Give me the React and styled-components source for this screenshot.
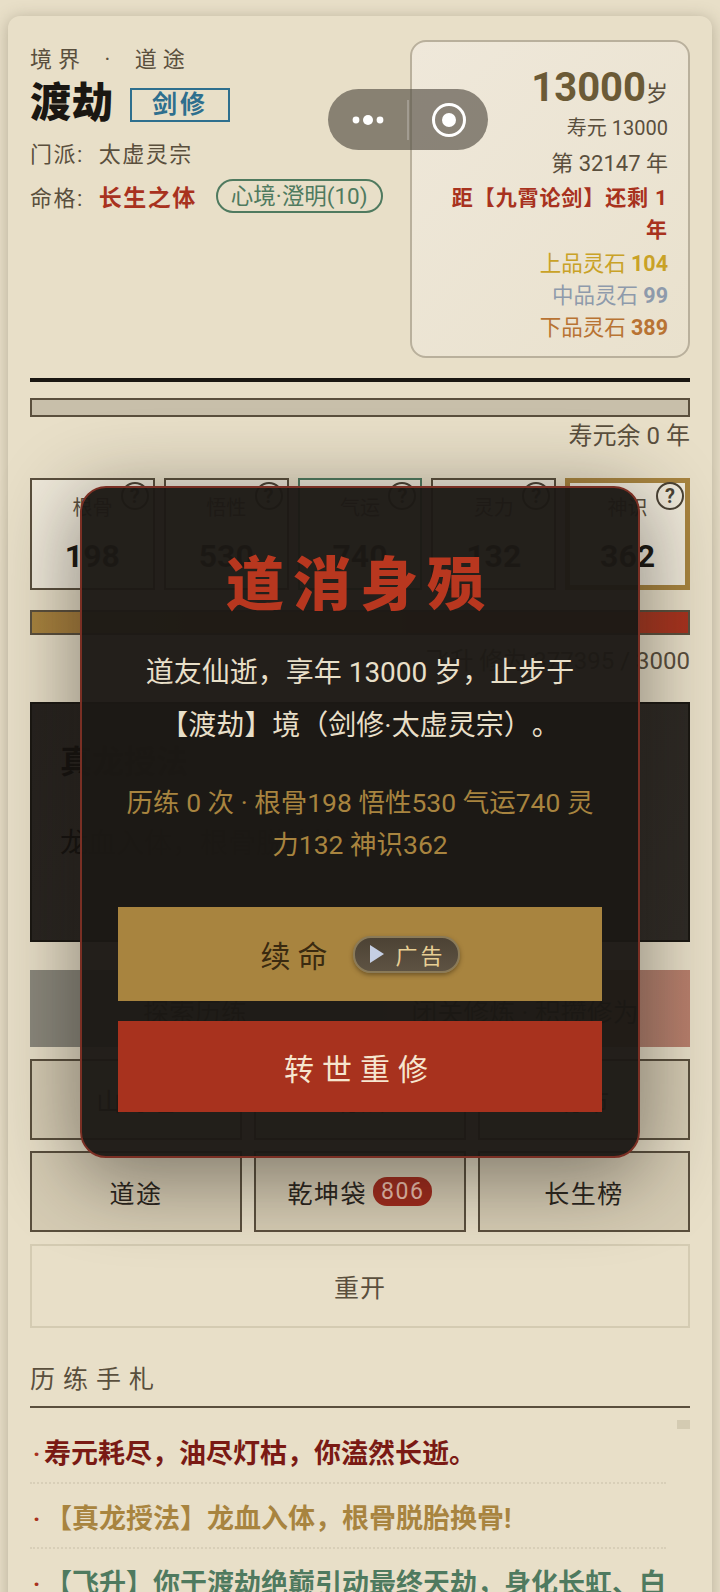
import React from 'react';
import styled, { createGlobalStyle } from 'styled-components';

const Global = createGlobalStyle`
  html, body {
    margin: 0;
    height: 1592px;
    overflow: hidden;
    background: #e8dfc8;
  }
  * { box-sizing: border-box; }
  body {
    font-family: Roboto, "Noto Sans CJK SC", sans-serif;
    text-spacing-trim: space-all;
    color: #1a1712;
  }
`;

const Page = styled.div`
  position: relative;
  height: 1592px;
  overflow: hidden;
  padding: 16px 8px 0;
`;

const Card = styled.div`
  height: 1600px;
  padding: 24px 22px;
  border-radius: 12px;
  background: #e8dfc8;
  box-shadow: 0 2px 16px rgba(90, 79, 61, 0.35);
`;

const Header = styled.div`
  display: flex;
  justify-content: space-between;
  align-items: flex-start;
  height: 317px;
`;

const Left = styled.div`
  padding-top: 2px;
`;

const Realm = styled.div`
  font-size: 22px;
  line-height: 36px;
  letter-spacing: 6px;
  word-spacing: 7px;
  color: #5a4f3d;
`;

const TitleRow = styled.div`
  display: flex;
  align-items: center;
  gap: 16px;
  height: 46px;
`;

const RealmName = styled.div`
  padding-top: 3px;
  font-size: 41px;
  font-weight: 900;
  line-height: 44px;
  letter-spacing: 1px;
`;

const SchoolTag = styled.div`
  width: 100px;
  height: 34px;
  margin-top: 7px;
  border: 2px solid #2e6f8e;
  color: #2e6f8e;
  font-size: 25px;
  font-weight: 700;
  letter-spacing: 3px;
  line-height: 29px;
  text-align: center;
`;

const InfoRow = styled.div`
  display: flex;
  align-items: center;
  height: ${(p) => p.$height || 40}px;
  margin-top: ${(p) => p.$top || 0}px;
  font-size: 22px;
  letter-spacing: 1.5px;
  color: #5a4f3d;
`;

const InfoKey = styled.span`
  margin-right: 15px;
`;

const Fate = styled.span`
  font-size: 23px;
  font-weight: 700;
  color: #a8321e;
`;

const Mood = styled.span`
  margin-left: 19px;
  padding: 0 13px;
  height: 34px;
  line-height: 30px;
  border: 2px solid #4f7a5f;
  border-radius: 17px;
  font-size: 22.5px;
  letter-spacing: 0;
  color: #4f7a5f;
`;

const AgeBox = styled.div`
  width: 280px;
  height: 318px;
  padding: 29px 20px 0;
  border: 2px solid #b9b09c;
  border-radius: 16px;
  background: linear-gradient(135deg, #efe8da, #e9e1cd);
  text-align: right;
  color: #5a4f3d;
`;

const AgeNum = styled.div`
  font-size: 40px;
  font-weight: 700;
  line-height: 34px;
  color: #6b5a36;

  small {
    font-size: 22px;
    font-weight: 400;
    color: #5a4f3d;
  }
`;

const AgeLine = styled.div`
  font-size: ${(p) => p.$size || 20}px;
  line-height: 35px;
`;

const Countdown = styled.div`
  font-size: 21px;
  font-weight: 700;
  line-height: 32px;
  margin: 1px 0 2px;
  letter-spacing: 0.9px;
  color: #a8321e;
`;

const Stone = styled.div`
  font-size: 21.5px;
  line-height: 32px;
  color: ${(p) => p.$color};

  b {
    font-weight: 700;
  }
`;

const ThickLine = styled.div`
  height: 4px;
  margin-top: 21px;
  background: #1a1712;
`;

const LifeBar = styled.div`
  height: 19px;
  margin-top: 16px;
  border: 2px solid #5a4f3d;
  background: #c8bfaa;
`;

const BarNote = styled.div`
  margin-top: ${(p) => p.$top}px;
  font-size: 24px;
  line-height: 36px;
  text-align: right;
  color: #5a4f3d;
`;

const Stats = styled.div`
  display: grid;
  grid-template-columns: repeat(5, 1fr);
  gap: 9px;
  margin-top: 24px;
`;

const Stat = styled.div`
  position: relative;
  height: 112px;
  padding-top: ${(p) => (p.$gold ? 11 : 14)}px;
  border: ${(p) => (p.$gold ? '5px solid #a8843f' : `2px solid ${p.$border || '#5a4f3d'}`)};
  background: #efe9da;
  text-align: center;
`;

const StatName = styled.div`
  font-size: 20px;
  line-height: 28px;
  color: #5a4f3d;
`;

const StatValue = styled.div`
  margin-top: 15px;
  font-size: 32px;
  font-weight: 700;
  line-height: 38px;
`;

const Help = styled.span`
  position: absolute;
  top: ${(p) => (p.$gold ? -1 : 2)}px;
  right: ${(p) => (p.$gold ? 1 : 4)}px;
  width: 28px;
  height: 28px;
  border: 2px solid #4a4234;
  border-radius: 50%;
  background: #efe9da;
  font-size: 20px;
  font-weight: 700;
  line-height: 24px;
  color: #4a4234;
`;

const ExpBar = styled.div`
  height: 25px;
  margin-top: 20px;
  border: 2px solid #5a4f3d;
  background: linear-gradient(90deg, #a8843f, #a8321e);
`;

const DarkPanel = styled.div`
  height: 240px;
  margin-top: 23px;
  padding: 34px 28px;
  border: 2px solid #1a1712;
  background: linear-gradient(135deg, #26221e, #2f2b26);
  color: #14110e;
`;

const PanelTitle = styled.div`
  font-size: 32px;
  font-weight: 700;
  line-height: 48px;
`;

const PanelText = styled.div`
  margin-top: 38px;
  font-size: 28px;
  line-height: 40px;
`;

const ActionRow = styled.div`
  display: grid;
  grid-template-columns: 1fr 1fr;
  height: 77px;
  margin-top: 28px;
  background: linear-gradient(90deg, #8b887c 0 50%, #b97f6c 100%);
  font-size: 26px;
`;

const Action = styled.div`
  display: flex;
  align-items: center;
  justify-content: center;
  padding-top: 4px;
  color: #1a1712;
`;

const NavGrid = styled.div`
  display: grid;
  grid-template-columns: repeat(3, 1fr);
  gap: 11px 12px;
  margin-top: 12px;
`;

const NavButton = styled.div`
  display: flex;
  align-items: center;
  justify-content: center;
  gap: 6px;
  height: 81px;
  border: 2px solid #5a4f3d;
  background: #d6ccb4;
  font-size: 25px;
  letter-spacing: 1.5px;
  color: #2a251d;
`;

const Badge = styled.span`
  padding: 0 8px;
  height: 29px;
  border-radius: 14px;
  background: #a02a1c;
  font-size: 23px;
  line-height: 29px;
  letter-spacing: 1.5px;
  color: #eec0b0;
`;

const Restart = styled.div`
  display: flex;
  align-items: center;
  justify-content: center;
  height: 84px;
  margin-top: 12px;
  border: 2px solid #d4cbb2;
  font-size: 25px;
  letter-spacing: 1px;
  color: #5a4f3d;
`;

const LogHead = styled.div`
  margin-top: 33px;
  padding-bottom: 7px;
  border-bottom: 2px solid #5a4f3d;
  font-size: 25px;
  line-height: 38px;
  letter-spacing: 8px;
  color: #5a4f3d;
`;

const LogWrap = styled.div`
  position: relative;
  padding-top: 11px;
`;

const ScrollThumb = styled.div`
  position: absolute;
  top: 12px;
  right: 0;
  width: 13px;
  height: 9px;
  background: #d4cbb2;
`;

const LogRow = styled.div`
  display: flex;
  margin-right: 24px;
  padding: 15px 0 8px;
  border-bottom: 2px dotted #d8cfb8;
  font-size: 27px;
  font-weight: 700;
  line-height: 40px;
  color: ${(p) => p.$color};
`;

const Dot = styled.span`
  flex: none;
  width: ${(p) => p.$w}px;
  padding-left: 3px;
  color: #a8321e;
  font-size: 24px;
`;

const Capsule = styled.div`
  position: absolute;
  top: 89px;
  left: 328px;
  display: flex;
  align-items: center;
  width: 160px;
  height: 61px;
  border-radius: 31px;
  background: rgba(90, 84, 74, 0.68);
`;

const CapsuleSide = styled.div`
  display: flex;
  align-items: center;
  justify-content: center;
  flex: 1;
  height: 100%;
`;

const CapsuleLine = styled.div`
  width: 2px;
  height: 40px;
  background: rgba(255, 255, 255, 0.22);
`;

const Modal = styled.div`
  position: absolute;
  top: 486px;
  left: 80px;
  width: 560px;
  height: 672px;
  padding: 58px 36px 0;
  border: 2px solid #7a2f24;
  border-radius: 26px;
  background: rgba(28, 25, 21, 0.97);
  box-shadow: 0 16px 80px 6px rgba(26, 23, 18, 0.45);
  text-align: center;
`;

const ModalTitle = styled.div`
  font-size: 58px;
  font-weight: 900;
  line-height: 78px;
  letter-spacing: 9px;
  color: #b8371f;
`;

const ModalBody = styled.div`
  margin-top: 22px;
  font-size: 28px;
  line-height: 53px;
  color: #e8dfc8;
`;

const ModalStats = styled.div`
  margin-top: 30px;
  font-size: 26.5px;
  line-height: 42px;
  color: #a8843f;
`;

const GoldButton = styled.div`
  display: flex;
  align-items: center;
  justify-content: center;
  gap: 22px;
  height: 94px;
  margin-top: 41px;
  background: #a8843f;
  font-size: 30px;
  letter-spacing: 7px;
  color: #3a2a10;
`;

const RedButton = styled.div`
  display: flex;
  align-items: center;
  justify-content: center;
  height: 91px;
  margin-top: 20px;
  background: #a8321e;
  font-size: 30px;
  letter-spacing: 8px;
  color: #f6e6cf;
`;

const AdPill = styled.span`
  display: flex;
  align-items: center;
  gap: 10px;
  height: 37px;
  margin-left: -3px;
  padding: 0 12px 0 14px;
  border: 2px solid #8a7a58;
  border-radius: 18px;
  background: linear-gradient(180deg, #4c4234, #5e5343);
  box-shadow: 0 2px 4px rgba(58, 42, 16, 0.5);
  font-size: 22px;
  letter-spacing: 3px;
  color: #e8cf95;
`;

const stats = [
  { name: '根骨', value: 198 },
  { name: '悟性', value: 530 },
  { name: '气运', value: 740, border: '#4f7a5f' },
  { name: '灵力', value: 132 },
  { name: '神识', value: 362, gold: true },
];

export default function App() {
  return (
    <Page>
      <Global />
      <Card>
        <Header>
          <Left>
            <Realm>境界 · 道途</Realm>
            <TitleRow>
              <RealmName>渡劫</RealmName>
              <SchoolTag>剑修</SchoolTag>
            </TitleRow>
            <InfoRow $top={8}><InfoKey>门派:</InfoKey>太虚灵宗</InfoRow>
            <InfoRow $top={2} $height={44}>
              <InfoKey>命格:</InfoKey>
              <Fate>长生之体</Fate>
              <Mood>心境·澄明(10)</Mood>
            </InfoRow>
          </Left>
          <AgeBox>
            <AgeNum>13000<small>岁</small></AgeNum>
            <AgeLine>寿元 13000</AgeLine>
            <AgeLine $size={22}>第 32147 年</AgeLine>
            <Countdown>距【九霄论剑】还剩 1 年</Countdown>
            <Stone $color="#c9a227">上品灵石 <b>104</b></Stone>
            <Stone $color="#8e9aab">中品灵石 <b>99</b></Stone>
            <Stone $color="#b87333">下品灵石 <b>389</b></Stone>
          </AgeBox>
        </Header>
        <ThickLine />
        <LifeBar />
        <BarNote $top={1}>寿元余 0 年</BarNote>
        <Stats>
          {stats.map((s) => (
            <Stat key={s.name} $gold={s.gold} $border={s.border}>
              <StatName>{s.name}</StatName>
              <StatValue>{s.value}</StatValue>
              <Help $gold={s.gold}>?</Help>
            </Stat>
          ))}
        </Stats>
        <ExpBar />
        <BarNote $top={8}>飞升 修为 377395 / 3000</BarNote>
        <DarkPanel>
          <PanelTitle>真龙授法</PanelTitle>
          <PanelText>龙血入体，根骨脱胎换骨</PanelText>
        </DarkPanel>
        <ActionRow>
          <Action>探索历练</Action>
          <Action>闭关修炼 · 积攒修为</Action>
        </ActionRow>
        <NavGrid>
          <NavButton>山海经</NavButton>
          <NavButton>功法</NavButton>
          <NavButton>坊市</NavButton>
          <NavButton>道途</NavButton>
          <NavButton>乾坤袋<Badge>806</Badge></NavButton>
          <NavButton>长生榜</NavButton>
        </NavGrid>
        <Restart>重开</Restart>
        <LogHead>历练手札</LogHead>
        <LogWrap>
          <ScrollThumb />
          <LogRow $color="#7a1a14"><Dot $w={14}>·</Dot>寿元耗尽，油尽灯枯，你溘然长逝。</LogRow>
          <LogRow $color="#a8843f"><Dot $w={15}>·</Dot>【真龙授法】龙血入体，根骨脱胎换骨!</LogRow>
          <LogRow $color="#4f7a5f"><Dot $w={15}>·</Dot>【飞升】你于渡劫绝巅引动最终天劫，身化长虹、白日飞升</LogRow>
        </LogWrap>
      </Card>

      <Capsule>
        <CapsuleSide>
          <svg width="38" height="14" viewBox="0 0 38 14" fill="#fff">
            <circle cx="7" cy="7" r="3.4" />
            <circle cx="19" cy="7" r="5" />
            <circle cx="31" cy="7" r="3.4" />
          </svg>
        </CapsuleSide>
        <CapsuleLine />
        <CapsuleSide>
          <svg width="36" height="36" viewBox="0 0 36 36" fill="none">
            <circle cx="18" cy="18" r="15.5" stroke="#fff" strokeWidth="3" />
            <circle cx="18" cy="18" r="7" fill="#fff" />
          </svg>
        </CapsuleSide>
      </Capsule>

      <Modal>
        <ModalTitle>道消身殒</ModalTitle>
        <ModalBody>
          道友仙逝，享年 13000 岁，止步于<br />【渡劫】境（剑修·太虚灵宗）。
        </ModalBody>
        <ModalStats>
          历练 0 次 · 根骨198 悟性530 气运740 灵<br />力132 神识362
        </ModalStats>
        <GoldButton>
          续命
          <AdPill>
            <svg width="16" height="20" viewBox="0 0 16 20" fill="#c5cfe4">
              <path d="M1 1 L15 10 L1 19 Z" />
            </svg>
            广告
          </AdPill>
        </GoldButton>
        <RedButton>转世重修</RedButton>
      </Modal>
    </Page>
  );
}
